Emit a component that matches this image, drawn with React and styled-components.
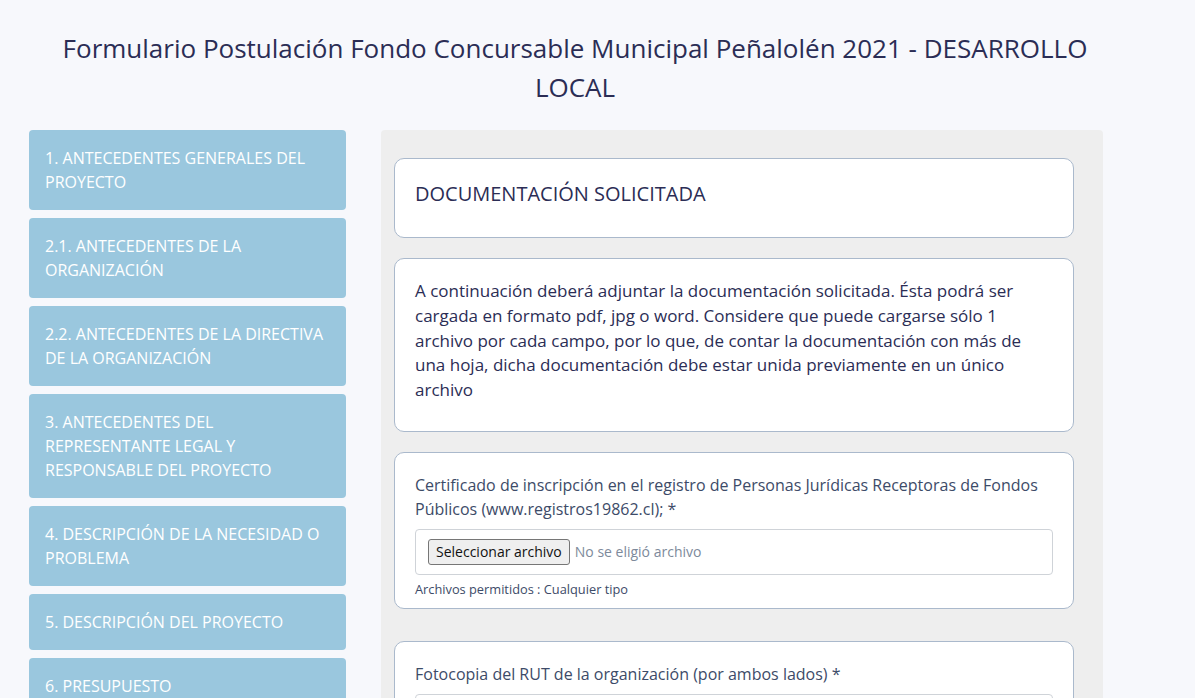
import React from 'react';
import styled, { createGlobalStyle } from 'styled-components';

const GlobalStyle = createGlobalStyle`
  html, body {
    margin: 0;
    padding: 0;
    background: #f7f8fc;
    font-family: "Open Sans", "Noto Sans", Arial, sans-serif;
  }
  ::-webkit-scrollbar {
    width: 7px;
  }
  ::-webkit-scrollbar-track {
    background: #f7f8fc;
    border-left: 1px solid #e3e4e9;
  }
  ::-webkit-scrollbar-thumb {
    background: #b6b6b8;
    border-left: 4px solid #f7f8fc;
  }
`;

const Page = styled.div`
  width: 1121px;
  box-sizing: border-box;
  padding-left: 29px;
  min-height: 1970px;
`;

const Header = styled.header`
  padding: 29px 0 0;
  height: 130px;
  box-sizing: border-box;
  text-align: center;
`;

const Title = styled.h1`
  margin: 0;
  font-size: 26px;
  font-weight: 400;
  line-height: 39px;
  color: #2b2d55;
`;

const Layout = styled.div`
  display: grid;
  grid-template-columns: 317px 722px;
  column-gap: 35px;
  align-items: start;
`;

const Sidebar = styled.nav`
  display: flex;
  flex-direction: column;
  gap: 8px;
`;

const NavItem = styled.a`
  display: block;
  background: #9ac7de;
  color: #ffffff;
  border-radius: 4px;
  padding: 16px 16px;
  font-size: 16px;
  line-height: 24px;
  text-transform: uppercase;
  text-decoration: none;
  cursor: pointer;
`;

const Panel = styled.main`
  background: #eeeeee;
  border-radius: 4px;
  padding: 28px 29px 20px 13px;
  display: flex;
  flex-direction: column;
`;

const Card = styled.section`
  background: #ffffff;
  border: 1px solid #aab9cc;
  border-radius: 10px;
  padding: 20px 20px ${p => p.$bottom || 20}px;
  margin-bottom: ${p => p.$gap || 20}px;
`;

const CardTitle = styled.h2`
  margin: 0 0 8px;
  font-size: 20px;
  font-weight: 400;
  line-height: 30px;
  color: #2b2d55;
`;

const Intro = styled.p`
  margin: 0 0 8px;
  max-width: 615px;
  font-size: 17px;
  line-height: 24.8px;
  color: #2b2d55;
`;

const Label = styled.label`
  display: block;
  font-size: 16px;
  line-height: 24px;
  color: #3d4b68;
  margin-bottom: 8px;
`;

const FileBox = styled.div`
  display: flex;
  align-items: center;
  gap: 5px;
  border: 1px solid #cfd3d8;
  border-radius: 4px;
  padding: 9px 12px;
`;

const FileButton = styled.button`
  font-family: "Open Sans", Arial, sans-serif;
  font-size: 14px;
  height: 26px;
  padding: 0 7px;
  background: #efefef;
  color: #111;
  border: 1px solid #767676;
  border-radius: 3px;
`;

const FileName = styled.span`
  font-size: 14px;
  color: #7d8a9b;
`;

const Help = styled.small`
  display: block;
  margin-top: 5px;
  font-size: 12.8px;
  line-height: 18px;
  color: #3d4b68;
`;

const sections = [
  '1. Antecedentes generales del proyecto',
  '2.1. Antecedentes de la organización',
  '2.2. Antecedentes de la directiva de la organización',
  '3. Antecedentes del representante legal y responsable del proyecto',
  '4. Descripción de la necesidad o problema',
  '5. Descripción del proyecto',
  '6. Presupuesto',
  '7. Documentación solicitada',
];

const documents = [
  'Certificado de inscripción en el registro de Personas Jurídicas Receptoras de Fondos Públicos (www.registros19862.cl); *',
  'Fotocopia del RUT de la organización (por ambos lados) *',
  'Certificado de vigencia de la personalidad jurídica *',
  'Fotocopia de la cédula de identidad del representante legal *',
];

function FileField({ label }) {
  return (
    <Card $bottom={10} $gap={32}>
      <Label>{label}</Label>
      <FileBox>
        <FileButton type="button">Seleccionar archivo</FileButton>
        <FileName>No se eligió archivo</FileName>
      </FileBox>
      <Help>Archivos permitidos : Cualquier tipo</Help>
    </Card>
  );
}

export default function App() {
  return (
    <>
      <GlobalStyle />
      <Page>
        <Header>
          <Title>Formulario Postulación Fondo Concursable Municipal Peñalolén 2021 - DESARROLLO LOCAL</Title>
        </Header>
        <Layout>
          <Sidebar>
            {sections.map(s => (
              <NavItem key={s}>{s}</NavItem>
            ))}
          </Sidebar>
          <Panel>
            <Card>
              <CardTitle>DOCUMENTACIÓN SOLICITADA</CardTitle>
            </Card>
            <Card>
              <Intro>
                A continuación deberá adjuntar la documentación solicitada. Ésta podrá ser cargada en formato pdf, jpg o word. Considere que puede cargarse sólo 1 archivo por cada campo, por lo que, de contar la documentación con más de una hoja, dicha documentación debe estar unida previamente en un único archivo
              </Intro>
            </Card>
            {documents.map(d => (
              <FileField key={d} label={d} />
            ))}
          </Panel>
        </Layout>
      </Page>
    </>
  );
}
